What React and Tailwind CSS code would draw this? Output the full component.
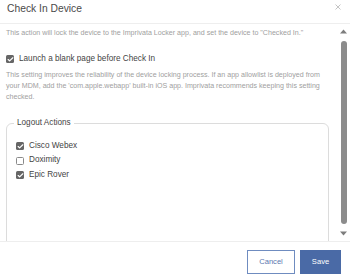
import { Check } from 'lucide-react'

const apps = [
  { name: 'Cisco Webex', checked: true },
  { name: 'Doximity', checked: false },
  { name: 'Epic Rover', checked: true },
]

function Box({ checked }) {
  return checked ? (
    <span className="w-[8px] h-[8px] rounded-[1.5px] bg-[#666] flex items-center justify-center shrink-0">
      <Check size={7} strokeWidth={4} className="text-white" />
    </span>
  ) : (
    <span className="w-[8px] h-[8px] rounded-[1.5px] border border-[#8a8a8a] bg-white shrink-0" />
  )
}

function Scrollbar() {
  return (
    <div className="w-[15px] shrink-0 flex flex-col items-end pr-[3px] bg-white">
      <div className="h-[15px] flex items-center justify-center w-[7px]">
        <svg width="7" height="5" viewBox="0 0 7 5"><path d="M3.5 0.5 L7 4.5 L0 4.5 Z" fill="#7d7d7d" /></svg>
      </div>
      <div className="flex-1 w-[7px] flex justify-center py-[2px]">
        <div className="w-[6px] h-full rounded-[3px] bg-[#8c8c8c]" />
      </div>
      <div className="h-[15px] flex items-center justify-center w-[7px]">
        <svg width="7" height="5" viewBox="0 0 7 5"><path d="M0 0.5 L7 0.5 L3.5 4.5 Z" fill="#7d7d7d" /></svg>
      </div>
    </div>
  )
}

export default function App() {
  return (
    <div className="w-[350px] h-[280px] bg-white flex flex-col font-['Liberation_Sans',Arial,sans-serif] overflow-hidden">
      <div className="h-[24px] shrink-0 border-b border-[#eee] flex items-start justify-between pl-[7px] pr-[9px] pt-[3px]">
        <h1 className="text-[10.3px] leading-[12px] text-[#4a4a4a]">Check In Device</h1>
        <svg width="6" height="6" viewBox="0 0 6 6" className="mt-[1px]">
          <path d="M0.5 0.5 L5.5 5.5 M5.5 0.5 L0.5 5.5" stroke="#c4c4c4" strokeWidth="1" />
        </svg>
      </div>

      <div className="flex-1 min-h-0 flex">
        <div className="flex-1 min-w-0 overflow-hidden px-[6px] pt-[4px]">
          <p className="text-[7.1px] leading-[11px] text-[#a0a0a0]">
            This action will lock the device to the Imprivata Locker app, and set the device to "Checked In."
          </p>

          <label className="mt-[14px] flex items-center gap-[5px] h-[12px]">
            <Box checked />
            <span className="text-[8.2px] text-[#444]">Launch a blank page before Check In</span>
          </label>

          <p className="mt-[5px] text-[7.1px] leading-[11px] text-[#a0a0a0]">
            This setting improves the reliability of the device locking process. If an app allowlist is deployed from your MDM, add the 'com.apple.webapp' built-in iOS app. Imprivata recommends keeping this setting checked.
          </p>

          <fieldset className="mt-[14px] border border-[#dcdcdc] rounded-[6px] pl-[7px] pr-[6px] pb-[76px]">
            <legend className="px-[3px] text-[8.2px] leading-[12px] text-[#444]">Logout Actions</legend>
            <div className="mt-[11px] flex flex-col gap-[2.5px] pl-[2px]">
              {apps.map(app => (
                <label key={app.name} className="flex items-center gap-[5px] h-[12px]">
                  <Box checked={app.checked} />
                  <span className="text-[8.2px] text-[#444]">{app.name}</span>
                </label>
              ))}
            </div>
          </fieldset>
        </div>
        <Scrollbar />
      </div>

      <div className="h-[39px] shrink-0 border-t border-[#eee] flex items-start justify-end gap-[5px] pr-[9px] pt-[8px]">
        <button className="w-[48px] h-[24px] border border-[#6f8cc0] text-[#5a78b0] text-[7.6px] bg-white">Cancel</button>
        <button className="w-[41px] h-[24px] bg-[#4a6aa6] text-white text-[7.6px]">Save</button>
      </div>
    </div>
  )
}
